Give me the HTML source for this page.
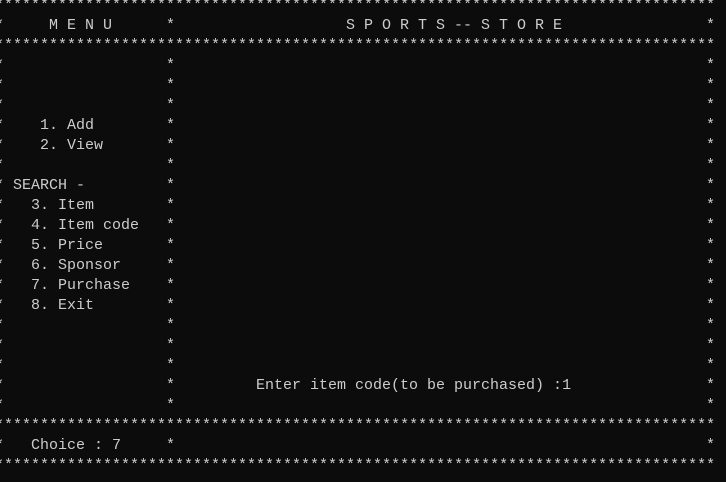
<!DOCTYPE html>
<html><head><meta charset="utf-8"><style>
html,body{margin:0;padding:0;background:#0c0c0c;width:726px;height:482px;overflow:hidden;position:relative}
pre{position:absolute;top:-4px;margin:0;font-family:"Liberation Mono","DejaVu Sans Mono",monospace;font-size:15px;line-height:20px;color:#cccccc;white-space:pre}
</style></head><body>
<pre style="left:-5px">********************************************************************************

********************************************************************************


















********************************************************************************

********************************************************************************</pre>
<pre style="left:-5px">

*

*
*
*
*
*
*
*
*
*
*
*
*
*
*
*
*
*
*

*</pre>
<pre style="left:166px">

*

*
*
*
*
*
*
*
*
*
*
*
*
*
*
*
*
*
*

*</pre>
<pre style="left:706px">

*

*
*
*
*
*
*
*
*
*
*
*
*
*
*
*
*
*
*

*</pre>
<pre style="left:4px">

     M E N U




    1. Add
    2. View

 SEARCH -
   3. Item
   4. Item code
   5. Price
   6. Sponsor
   7. Purchase
   8. Exit






   Choice : 7</pre>
<pre style="left:175px">

                   S P O R T S -- S T O R E

















         Enter item code(to be purchased) :1</pre>
</body></html>
